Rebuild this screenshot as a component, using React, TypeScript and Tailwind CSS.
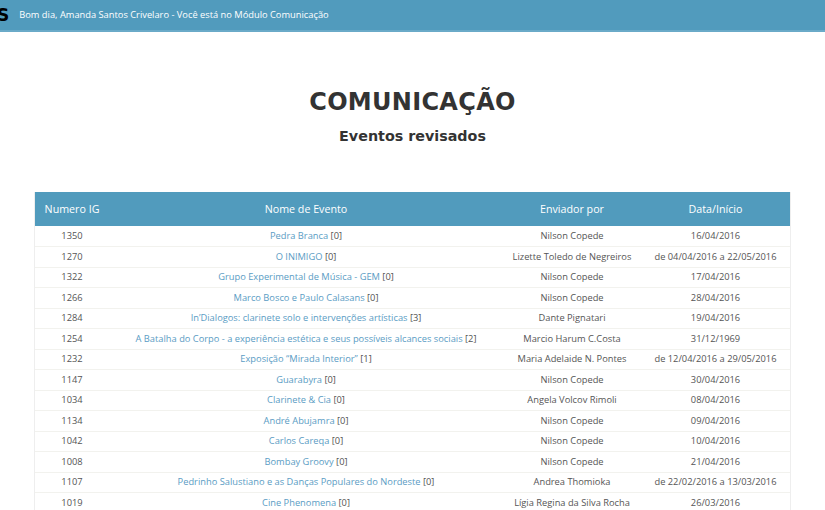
const rows: [string, string, string, string, string][] = [
  ['1350', 'Pedra Branca', '0', 'Nilson Copede', '16/04/2016'],
  ['1270', 'O INIMIGO', '0', 'Lizette Toledo de Negreiros', 'de 04/04/2016 a 22/05/2016'],
  ['1322', 'Grupo Experimental de Música - GEM', '0', 'Nilson Copede', '17/04/2016'],
  ['1266', 'Marco Bosco e Paulo Calasans', '0', 'Nilson Copede', '28/04/2016'],
  ['1284', 'In’Dialogos: clarinete solo e intervenções artísticas', '3', 'Dante Pignatari', '19/04/2016'],
  ['1254', 'A Batalha do Corpo - a experiência estética e seus possíveis alcances sociais', '2', 'Marcio Harum C.Costa', '31/12/1969'],
  ['1232', 'Exposição “Mirada Interior”', '1', 'Maria Adelaide N. Pontes', 'de 12/04/2016 a 29/05/2016'],
  ['1147', 'Guarabyra', '0', 'Nilson Copede', '30/04/2016'],
  ['1034', 'Clarinete & Cia', '0', 'Angela Volcov Rimoli', '08/04/2016'],
  ['1134', 'André Abujamra', '0', 'Nilson Copede', '09/04/2016'],
  ['1042', 'Carlos Careqa', '0', 'Nilson Copede', '10/04/2016'],
  ['1008', 'Bombay Groovy', '0', 'Nilson Copede', '21/04/2016'],
  ['1107', 'Pedrinho Salustiano e as Danças Populares do Nordeste', '0', 'Andrea Thomioka', 'de 22/02/2016 a 13/03/2016'],
  ['1019', 'Cine Phenomena', '0', 'Lígia Regina da Silva Rocha', '26/03/2016'],
];

export default function App() {
  return (
    <div className="min-h-screen bg-white font-['Open_Sans',sans-serif] text-[#555]">
      <div className="flex h-[32px] items-center overflow-hidden border-b-2 border-[#6aaac8] bg-[#519bbd]">
        <span className="ml-[-3px] font-['DejaVu_Sans',sans-serif] text-[17px] font-bold leading-none text-black">S</span>
        <span className="ml-[10px] text-[9.3px] text-white">
          Bom dia, Amanda Santos Crivelaro - Você está no Módulo Comunicação
        </span>
      </div>

      <div className="pt-[54px] text-center font-['DejaVu_Sans',sans-serif] font-bold text-[#333]">
        <h1 className="text-[24px] leading-[32px] tracking-[0.3px]">COMUNICAÇÃO</h1>
        <h2 className="mt-[8px] text-[14.3px] leading-[20px]">Eventos revisados</h2>
      </div>

      <div className="mx-[34px] mt-[46px] border-x border-[#eee]">
        <table className="w-full border-collapse text-center text-[9.3px]">
          <thead>
            <tr className="h-[34px] bg-[#519bbd] text-[10.7px] text-white">
              <th className="w-[74px] font-normal">Numero IG</th>
              <th className="w-[394px] font-normal">Nome de Evento</th>
              <th className="w-[138px] font-normal">Enviador por</th>
              <th className="font-normal">Data/Início</th>
            </tr>
          </thead>
          <tbody>
            {rows.map(([id, name, count, by, date]) => (
              <tr key={id} className="h-[20.5px] border-b border-[#f2f2ee]">
                <td>{id}</td>
                <td>
                  <a className="text-[#5a9cc4]">{name}</a> [{count}]
                </td>
                <td>{by}</td>
                <td>{date}</td>
              </tr>
            ))}
          </tbody>
        </table>
      </div>
    </div>
  );
}
